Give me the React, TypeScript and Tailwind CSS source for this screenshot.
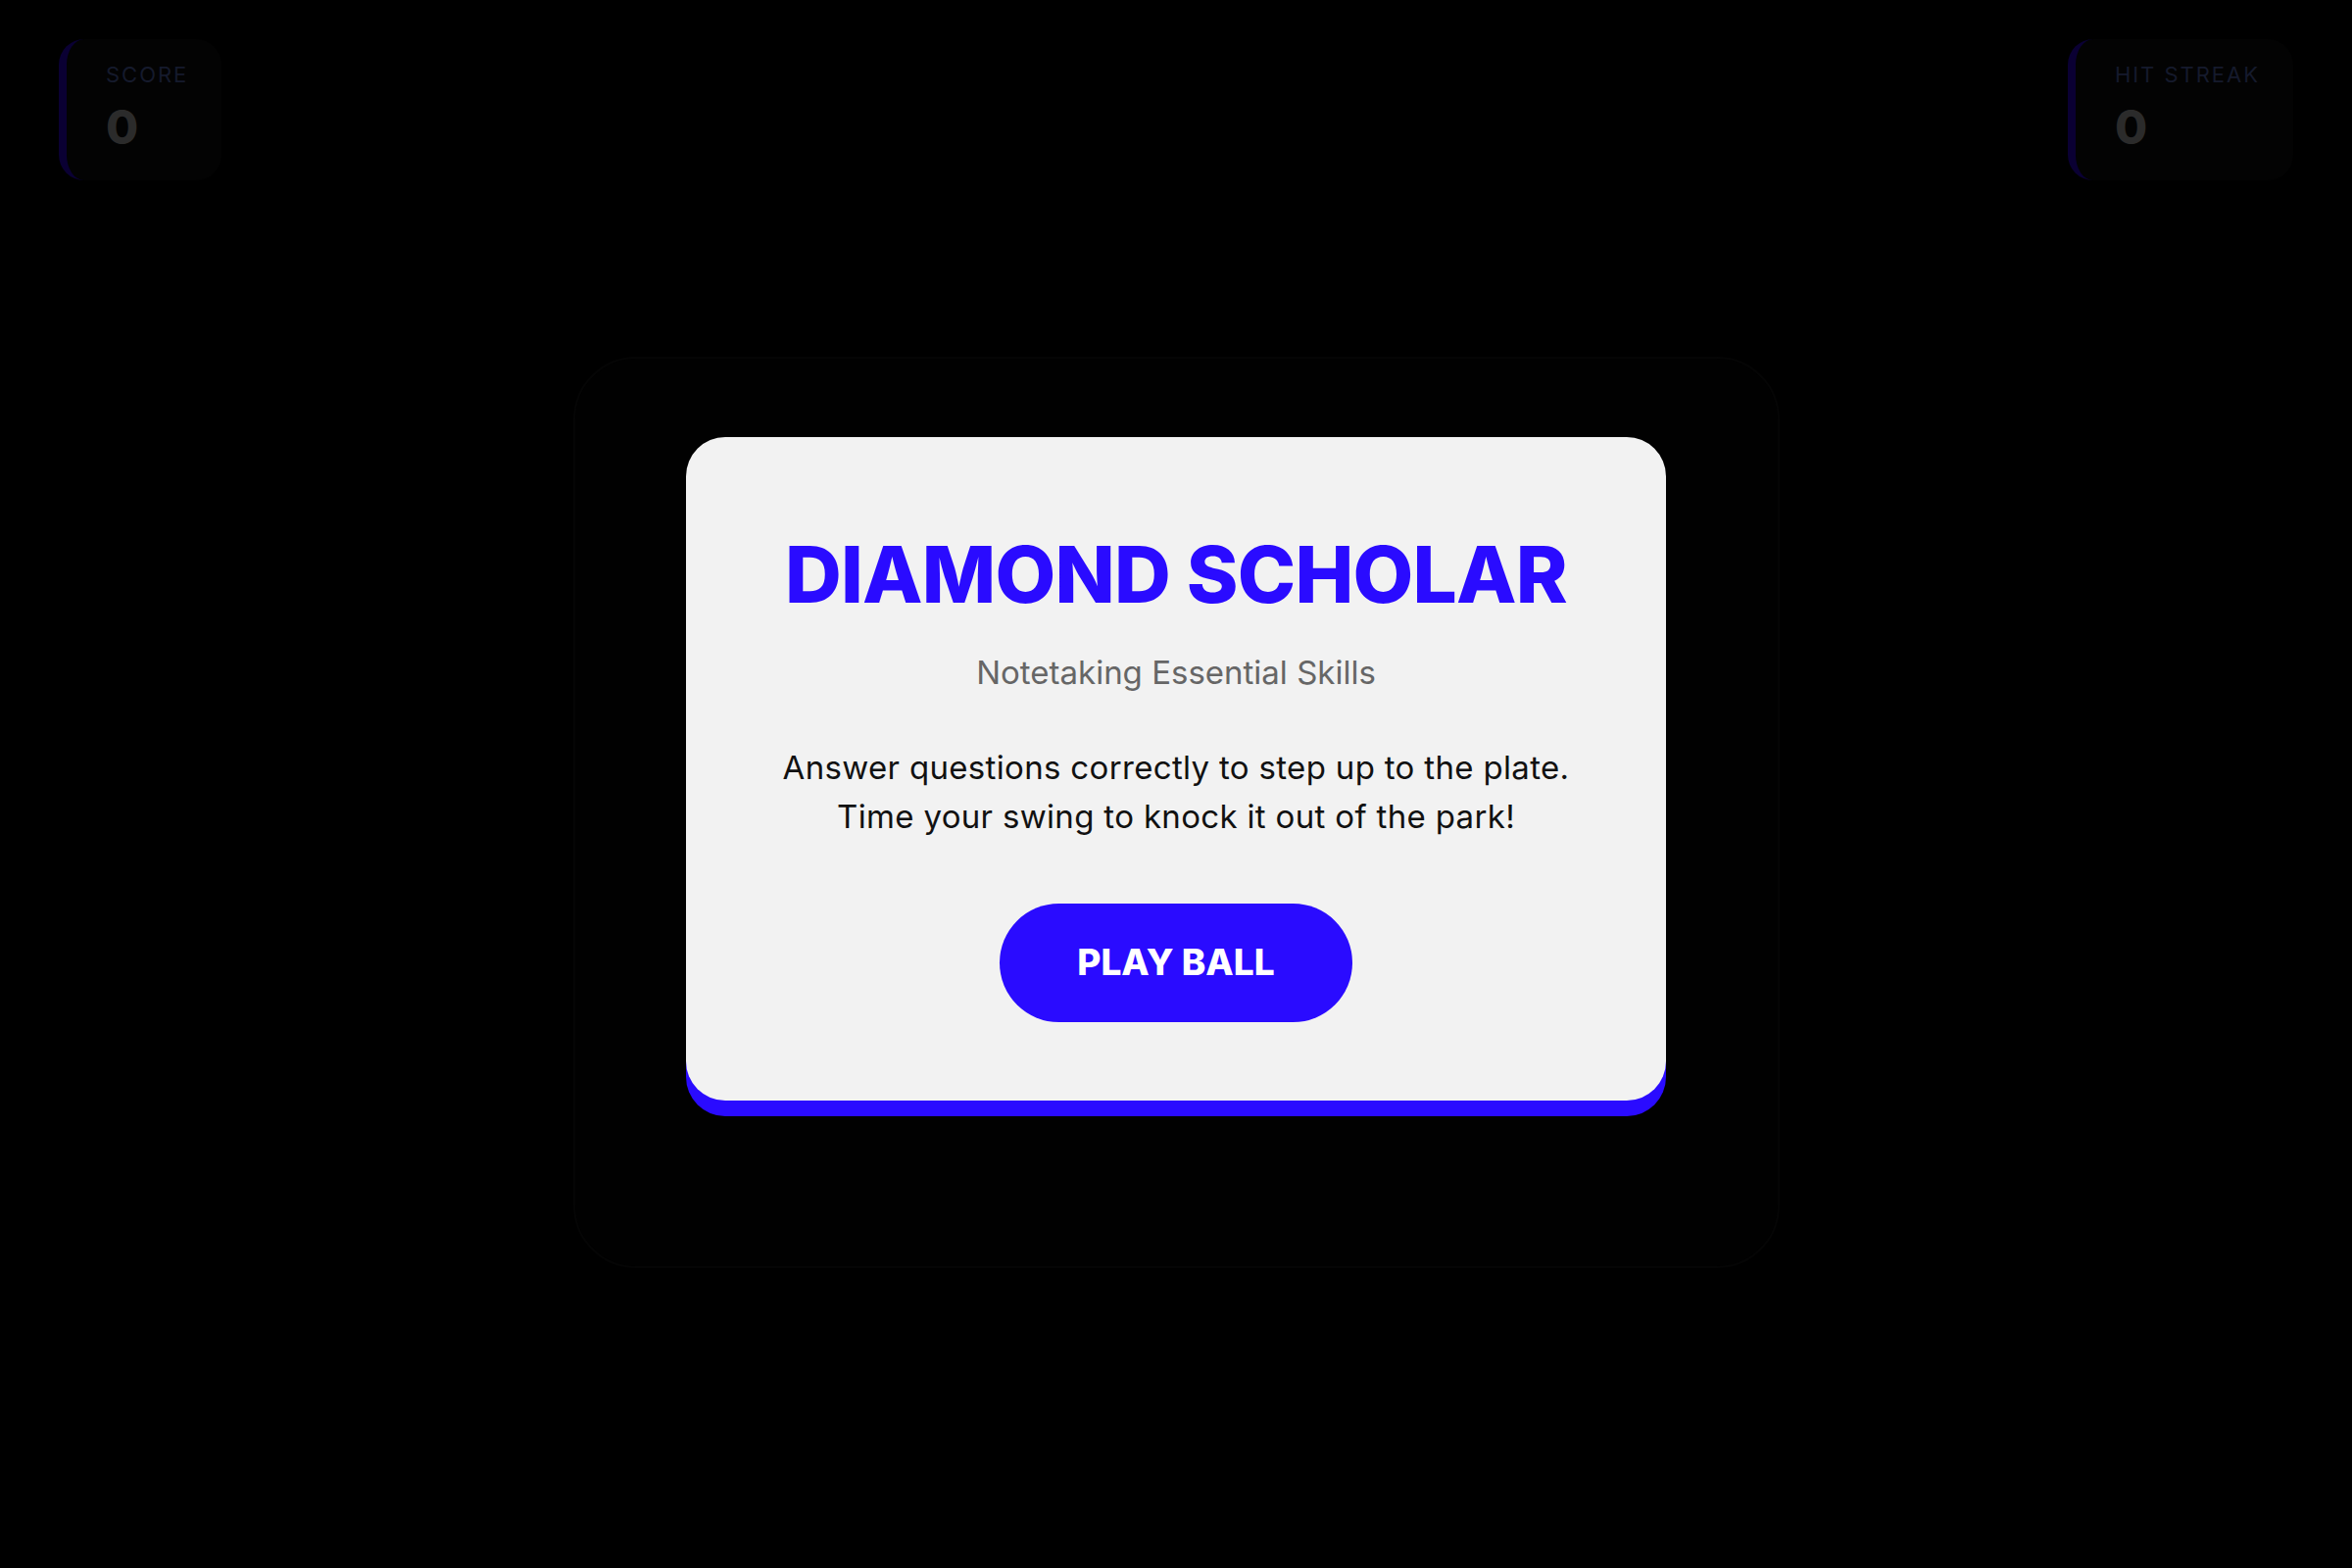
import React from 'react';

const BLUE = '#2a0bff';

function StatBox({ label, value }: { label: string; value: number }) {
  return (
    <div className="rounded-[26px] border-l-8 border-[#0a0033] bg-[#030303] pl-10 pr-[34px] pt-[20px] pb-[24px]">
      <div className="text-[22px] leading-[32px] tracking-[0.09em] text-[#151a2c]">{label}</div>
      <div className="text-[48px] leading-[60px] font-extrabold text-[#2b2b2b] mt-[8px]">{value}</div>
    </div>
  );
}

export default function App() {
  return (
    <div
      className="relative w-full h-[1600px] bg-black overflow-hidden"
      style={{ fontFamily: 'Inter, "Noto Sans", sans-serif' }}
    >
      <div className="flex justify-between items-start px-[60px] pt-[40px]">
        <StatBox label="SCORE" value={0} />
        <StatBox label="HIT STREAK" value={0} />
      </div>

      {/* game field, dimmed behind the start overlay */}
      <div className="mx-auto mt-[180px] w-[1231px] h-[930px] rounded-[64px] bg-[#010101] border-2 border-[#050505]" />

      <div className="absolute inset-0 flex items-center justify-center pb-[32px]">
        <div
          className="w-[1000px] rounded-[40px] bg-[#f2f2f2] px-[80px] pt-[92px] pb-[80px] flex flex-col items-center text-center"
          style={{ boxShadow: `0 16px 0 ${BLUE}` }}
        >
          <h1 className="text-[80px] leading-[96px] font-extrabold text-[#2a0bff] tracking-[-0.01em] whitespace-nowrap">
            DIAMOND SCHOLAR
          </h1>
          <p className="mt-[30px] text-[33px] leading-[44px] text-[#666666]">Notetaking Essential Skills</p>
          <p className="mt-[50px] text-[33px] leading-[50px] tracking-[0.01em] text-[#111111] whitespace-nowrap">
            Answer questions correctly to step up to the plate.
            <br />
            Time your swing to knock it out of the park!
          </p>
          <button className="mt-[64px] w-[360px] h-[121px] rounded-full bg-[#2a0bff] text-white text-[37px] font-extrabold">
            PLAY BALL
          </button>
        </div>
      </div>
    </div>
  );
}
